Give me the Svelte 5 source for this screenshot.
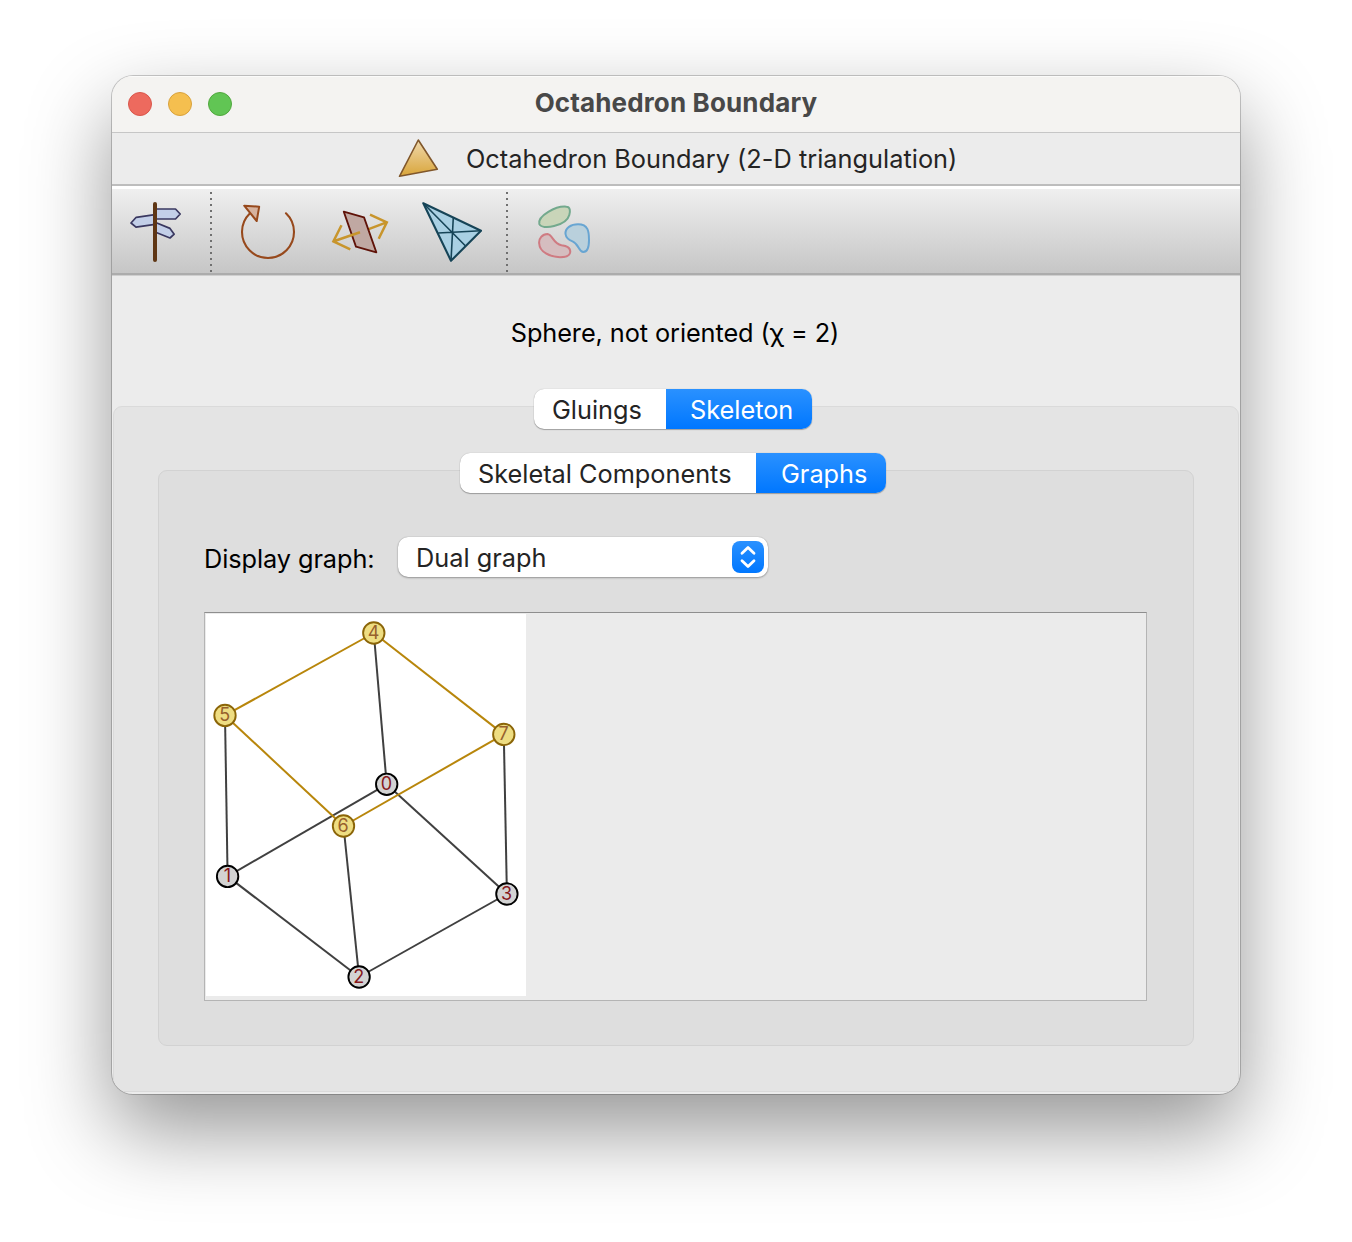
<script>
  const nodes = [
    { id: 0, x: 386.7, y: 784.3 },
    { id: 1, x: 227.6, y: 876.4 },
    { id: 2, x: 359.1, y: 977 },
    { id: 3, x: 506.9, y: 894 },
    { id: 4, x: 373.8, y: 633 },
    { id: 5, x: 225, y: 715.4 },
    { id: 6, x: 343.5, y: 826 },
    { id: 7, x: 503.8, y: 734.4 }
  ];
  const edges = [
    [0, 4], [1, 5], [3, 7], [0, 1], [1, 2], [2, 3], [0, 3], [2, 6],
    [4, 5], [4, 7], [5, 6], [6, 7]
  ];
  const isGold = (id) => id > 3;
</script>

<div class="window">
  <header class="titlebar">
    <div class="lights">
      <span class="light red"></span>
      <span class="light yellow"></span>
      <span class="light green"></span>
    </div>
    <h1>Octahedron Boundary</h1>
    <div class="lights-balance"></div>
  </header>

  <div class="packet">
    <svg class="packet-icon" viewBox="398 137 42 42">
      <defs>
        <linearGradient id="sand" x1="0" y1="0" x2="0" y2="1">
          <stop offset="0" stop-color="#efd9ad" />
          <stop offset="1" stop-color="#d9a53a" />
        </linearGradient>
      </defs>
      <path d="M418.3 140L437.3 169.3L399.5 176.3Z" fill="url(#sand)" stroke="#80572b" stroke-width="1.6" stroke-linejoin="round" />
    </svg>
    <span class="t-packet">Octahedron Boundary (2-D triangulation)</span>
  </div>

  <nav class="toolbar">
    <svg class="tool" viewBox="123 200 64 64">
      <g fill="#c3cfe8" stroke="#3a3860" stroke-width="1.7" stroke-linejoin="round">
        <path d="M155 209H175.5L180.2 214L175.5 219H155Z" />
        <path d="M155 214.6L136.2 217.3L131 223L136 227.2L155 224.4Z" />
        <path d="M155 222.2L170 228.4L174.2 234.2L170 238L155 232Z" />
      </g>
      <path d="M155 204V260" stroke="#5f3614" stroke-width="4" stroke-linecap="round" />
    </svg>
    <div class="sep first"></div>
    <svg class="tool loop" viewBox="236 200 64 64">
      <path d="M286 213.3A26 26 0 1 1 250 213.3" fill="none" stroke="#97491c" stroke-width="2.1" stroke-linecap="round" />
      <path d="M244.2 205.7L259.2 206.7L256.7 221Z" fill="#d6b29e" stroke="#97491c" stroke-width="2" stroke-linejoin="round" />
    </svg>
    <svg class="tool" viewBox="328 200 64 64">
      <g fill="none" stroke="#c8952c" stroke-width="2.5">
        <path d="M368 229.3L386.5 222.4M370 214.7L386.8 222.3L378.7 238.7" />
      </g>
      <path d="M343.8 211.7L364 217.3L376.3 252.3L356 246.7Z" fill="#c0a8a2" stroke="#5f1208" stroke-width="1.9" stroke-linejoin="round" />
      <g fill="none" stroke="#c8952c" stroke-width="2.5">
        <path d="M360 232.2L333.8 241.2M341.5 225.3L333.4 241.4L350.3 249.4" />
      </g>
    </svg>
    <svg class="tool" viewBox="420 200 64 64">
      <g fill="#a9d0e3" stroke="#164457" stroke-linejoin="round">
        <path d="M423.3 203.3L481 230.8L451 260.8Z" stroke-width="2.1" />
        <path d="M423.3 203.3L465.3 245.7M453.3 217.5L451 260.8M481 230.8L438.2 233" stroke-width="1.6" />
      </g>
    </svg>
    <div class="sep"></div>
    <svg class="tool blobs" viewBox="533 200 64 64">
      <g stroke-width="2">
        <path d="M539.3 224C537.5 216 556 205.6 566.5 206.7C570.5 207 570.3 211.5 569.3 215C566.5 226 541.5 230.5 539.3 224Z" fill="#c9d5b9" stroke="#73a98d" />
        <path d="M565.5 234C565 228 571 224.3 578 224.3C588.5 224.3 589 232 589 240C589 247 587 252 583.3 252C578.5 251.6 579 244 572.5 241.4C568.5 239.8 566 238 565.5 234Z" fill="#b9d0dc" stroke="#68a5d2" />
        <path d="M539.2 243.5C538.5 238.5 542.5 234 547.5 234C552.5 234.5 553 243.5 561.5 245.3C566.5 246 570.3 247 570.3 252C569.8 256.5 565 257.2 560 257.2C550 257 539.5 252 539.2 243.5Z" fill="#d5bdbf" stroke="#cf7b82" />
      </g>
    </svg>
  </nav>

  <main>
    <p class="summary">Sphere, not oriented (χ = 2)</p>

    <section class="panel outer">
      <div class="segments main-tabs">
        <button class="seg">Gluings</button>
        <button class="seg on">Skeleton</button>
      </div>

      <section class="panel inner">
        <div class="segments sub-tabs">
          <button class="seg">Skeletal Components</button>
          <button class="seg on">Graphs</button>
        </div>

        <div class="chooser">
          <span class="label">Display graph:</span>
          <div class="select">
            <span>Dual graph</span>
            <span class="stepper">
              <svg viewBox="0 0 32 32">
                <path d="M10 12.3L16 6.5L22 12.3M10 19.7L16 25.5L22 19.7" fill="none" stroke="#fff" stroke-width="2.8" stroke-linecap="round" stroke-linejoin="round" />
              </svg>
            </span>
          </div>
        </div>

        <div class="viewport">
          <svg class="graph" viewBox="206 614 320 382">
            {#each edges as [a, b]}
              <line
                class:gold={isGold(a) && isGold(b)}
                x1={nodes[a].x} y1={nodes[a].y} x2={nodes[b].x} y2={nodes[b].y}
              />
            {/each}
            {#each nodes as n}
              <g class="node" class:gold={isGold(n.id)}>
                <circle cx={n.x} cy={n.y} r="10.7" />
                <text x={n.x - 0.3} y={n.y + 6}>{n.id}</text>
              </g>
            {/each}
          </svg>
        </div>
      </section>
    </section>
  </main>
</div>

<style>
  :global(body) {
    background: #fff;
    overflow: hidden;
  }
  :global(#app) {
    padding: 76px 112px 0;
    height: 1242px;
    box-sizing: border-box;
  }
  .window {
    width: 1128px;
    height: 1018px;
    border-radius: 21px;
    overflow: hidden;
    background: #ececec;
    display: flex;
    flex-direction: column;
    font-family: Inter, "Liberation Sans", sans-serif;
    font-size: 25.3px;
    color: #242424;
    white-space: nowrap;
    box-shadow:
      0 0 0 1px rgba(0, 0, 0, 0.2),
      0 36px 84px rgba(0, 0, 0, 0.42);
  }
  .titlebar {
    height: 56px;
    flex: none;
    display: flex;
    align-items: center;
    justify-content: space-between;
    padding: 0 16px;
    background: #f4f3f1;
    border-bottom: 1px solid #c6c6c6;
    box-shadow: inset 0 1px #fbfbfa;
  }
  .lights,
  .lights-balance {
    width: 104px;
    display: flex;
    gap: 16px;
  }
  .light {
    width: 24px;
    height: 24px;
    border-radius: 50%;
    box-sizing: border-box;
  }
  .red { background: #ed6a5e; border: 1px solid #d9564b; }
  .yellow { background: #f5bf4f; border: 1px solid #d8a13c; }
  .green { background: #61c554; border: 1px solid #51a73e; }
  h1 {
    margin: 0 0 4px;
    font-size: 26px;
    font-weight: 700;
    letter-spacing: 0.14px;
    color: #484848;
  }
  .packet {
    height: 49px;
    flex: none;
    display: flex;
    align-items: center;
    padding: 0 0 2px 286px;
    gap: 26px;
    border-bottom: 2px solid #bdbdbd;
  }
  .packet-icon {
    width: 42px;
    height: 42px;
  }
  .t-packet {
    letter-spacing: 0.03px;
    padding-top: 2px;
  }
  .toolbar {
    flex: none;
    height: 82px;
    padding: 2px 0 0 11px;
    border-top: 3px solid #fff;
    border-bottom: 2px solid #acacac;
    box-shadow: 0 1px #cfcfcf;
    background: linear-gradient(#efefef, #c6c6c6);
    display: flex;
    align-items: center;
  }
  .tool {
    width: 64px;
    height: 64px;
    margin-right: 28px;
  }
  .tool:first-child {
    margin-right: 23px;
  }
  .sep {
    width: 2px;
    height: 80px;
    margin: 0 25px 0 -6px;
    background: repeating-linear-gradient(#707070 0 2px, transparent 2px 6px);
  }
  .sep.first {
    margin-left: 0;
    margin-right: 24px;
  }
  main {
    display: flex;
    flex-direction: column;
    flex: 1;
    padding: 0 1px 3px;
  }
  .summary {
    margin: 41px 2px 0 0;
    height: 34px;
    line-height: 34px;
    letter-spacing: -0.08px;
    text-align: center;
    color: #000;
  }
  .panel {
    box-sizing: border-box;
    border-radius: 9px;
    display: flex;
    flex-direction: column;
  }
  .outer {
    margin-top: 56px;
    height: 686px;
    background: #e4e4e4;
    border: 1px solid #dadada;
    padding: 0 44px;
  }
  .inner {
    height: 576px;
    margin-top: 41px;
    background: #dedede;
    border: 1px solid #d2d2d2;
    padding: 0 45px;
  }
  .segments {
    display: flex;
    align-self: center;
    height: 40px;
    margin-top: -18px;
    margin-right: 6px;
    border-radius: 10px;
    background: #fff;
    box-shadow:
      0 0 1px rgba(0, 0, 0, 0.3),
      0 1px 1px rgba(0, 0, 0, 0.28);
  }
  .main-tabs { width: 278px; }
  .sub-tabs { width: 426px; }
  .seg {
    border: 0;
    margin: 0;
    padding: 0 0 0 18px;
    background: none;
    font: inherit;
    color: inherit;
    text-align: left;
    white-space: nowrap;
  }
  .main-tabs .seg { width: 132px; }
  .main-tabs .seg.on { width: 146px; }
  .sub-tabs .seg { width: 296px; }
  .sub-tabs .seg.on { width: 130px; padding-left: 25px; }
  .seg.on {
    padding-left: 24px;
    background: linear-gradient(#2a91ff, #0077ff);
    color: #fff;
    border-radius: 0 10px 10px 0;
  }
  .chooser {
    display: flex;
    align-items: center;
    margin-top: 44px;
    height: 40px;
  }
  .label {
    width: 194px;
    color: #000;
    letter-spacing: -0.07px;
    padding-top: 2px;
  }
  .select {
    width: 370px;
    height: 40px;
    box-sizing: border-box;
    padding: 0 4px 0 18px;
    display: flex;
    align-items: center;
    justify-content: space-between;
    border-radius: 10px;
    background: #fff;
    box-shadow:
      0 0 1px rgba(0, 0, 0, 0.35),
      0 1px 2px rgba(0, 0, 0, 0.3);
  }
  .stepper {
    width: 32px;
    height: 32px;
    border-radius: 8px;
    background: linear-gradient(#2a91ff, #0077ff);
  }
  .stepper svg {
    display: block;
  }
  .viewport {
    margin-top: 35px;
    width: 943px;
    height: 389px;
    box-sizing: border-box;
    border: 1px solid #b4b4b4;
    border-top-color: #8e8e8e;
    background: #ebebeb;
    padding: 1px 0 0 1px;
  }
  .graph {
    display: block;
    width: 320px;
    height: 382px;
    background: #fff;
  }
  line {
    stroke: #404040;
    stroke-width: 2;
  }
  line.gold {
    stroke: #b8860b;
  }
  .node circle {
    fill: #d3d3d3;
    stroke: #000;
    stroke-width: 1.9;
  }
  .node text {
    fill: #86181c;
    font-size: 18px;
    text-anchor: middle;
  }
  .node.gold circle {
    fill: #eedd82;
    stroke: #8b6508;
  }
  .node.gold text {
    fill: #97602c;
  }
</style>
